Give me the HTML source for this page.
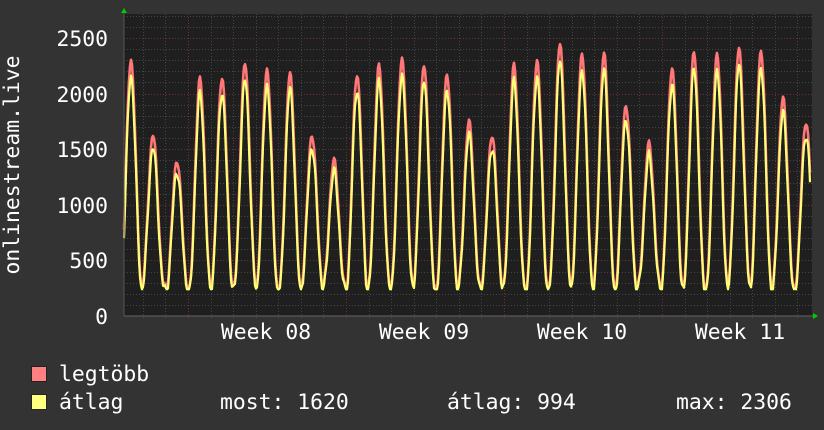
<!DOCTYPE html>
<html><head><meta charset="utf-8"><style>
html,body{margin:0;padding:0;background:#333333;}
body{width:824px;height:430px;overflow:hidden;position:relative;}
svg{position:absolute;left:0;top:0;}
text{font-family:"DejaVu Sans Mono","Liberation Mono",monospace;font-size:21.4px;fill:#ffffff;}
</style></head><body>
<svg id="g" width="824" height="430" xmlns="http://www.w3.org/2000/svg">
<rect x="124" y="14" width="688" height="302" fill="#1f1f1f"/>
<g id="grid"></g>
<path id="red" fill="none" stroke="#ff7777" stroke-width="2.6" stroke-linejoin="round"/>
<path id="yel" fill="none" stroke="#ffff77" stroke-width="2.2" stroke-linejoin="round"/>
<line x1="124" y1="316" x2="815" y2="316" stroke="#666" stroke-width="1"/>
<line x1="124" y1="10" x2="124" y2="316" stroke="#555" stroke-width="1"/>
<polygon points="121,13 127,13 124,8" fill="#00cc00"/>
<polygon points="813,313 813,319 818,316" fill="#00cc00"/>
<text x="108" y="46" text-anchor="end">2500</text>
<text x="108" y="102" text-anchor="end">2000</text>
<text x="108" y="157" text-anchor="end">1500</text>
<text x="108" y="213" text-anchor="end">1000</text>
<text x="108" y="268" text-anchor="end">500</text>
<text x="108" y="324" text-anchor="end">0</text>
<text transform="translate(19,165) rotate(-90)" text-anchor="middle">onlinestream.live</text>
<text x="266" y="339" text-anchor="middle">Week 08</text>
<text x="424" y="339" text-anchor="middle">Week 09</text>
<text x="582" y="339" text-anchor="middle">Week 10</text>
<text x="740" y="339" text-anchor="middle">Week 11</text>
<rect x="31.5" y="366.5" width="15" height="15" fill="#ff8080" stroke="#222"/>
<rect x="31.5" y="394.5" width="15" height="15" fill="#ffff80" stroke="#222"/>
<text x="59" y="381">legtöbb</text>
<text x="59" y="409">átlag</text>
<text x="220" y="409">most: 1620</text>
<text x="447" y="409">átlag: 994</text>
<text x="676" y="409">max: 2306</text>
</svg>
<script>
var ns="http://www.w3.org/2000/svg",g=document.getElementById("grid");
function ln(x1,y1,x2,y2,c){var l=document.createElementNS(ns,"line");l.setAttribute("x1",x1);l.setAttribute("y1",y1);l.setAttribute("x2",x2);l.setAttribute("y2",y2);l.setAttribute("stroke",c);l.setAttribute("stroke-width","1");l.setAttribute("stroke-dasharray","1,2");g.appendChild(l);}
function Y(v){return 316-v*0.1112;}
for(var v=100;v<=2700;v+=100){var y=Math.round(Y(v))+0.5;if(y<14)break;ln(124,y,812,y,v%500==0?"#6a3232":"#454545");}
for(var k=-10;k<40;k++){var x=188+k*22.57;if(x<126||x>812)continue;x=Math.round(x)+0.5;ln(x,14,x,319,k%7==0?"#6a3232":"#454545");}
var P=[[131,2300],[153,1630],[177,1400],[200,2130],[222,2150],[245,2270],[267,2220],[290,2180],[312,1630],[334,1400],[357,2180],[379,2250],[402,2320],[424,2250],[447,2180],[469,1750],[492,1630],[514,2250],[537,2300],[560,2450],[582,2360],[604,2360],[626,1900],[649,1550],[672,2230],[694,2370],[717,2360],[739,2410],[761,2390],[783,1960],[806,1750],[828,1800]];
function val(x,f){for(var i=0;i<P.length;i++){var d=(x-P[i][0])/22.6;if(Math.abs(d)>0.5)continue;var c=(1+Math.cos(d*2*Math.PI))/2;c=Math.pow(c,1.15);var base=260+30*Math.sin(i*1.7);return base+(P[i][1]*f-base)*c;}return 270;}
var r="",yy="";
for(var x=124;x<=810;x+=1){var a=val(x,1),b=val(x,0.95);var n=Math.sin(x*1.3)*30+Math.sin(x*0.7)*20;b=Math.max(240,b-30+n);a=Math.max(b+15,a+n*0.6);r+=(x==124?"M":"L")+x+","+Y(a).toFixed(1);yy+=(x==124?"M":"L")+x+","+Y(b).toFixed(1);}
document.getElementById("red").setAttribute("d",r);document.getElementById("yel").setAttribute("d",yy);
</script>
</body></html>
